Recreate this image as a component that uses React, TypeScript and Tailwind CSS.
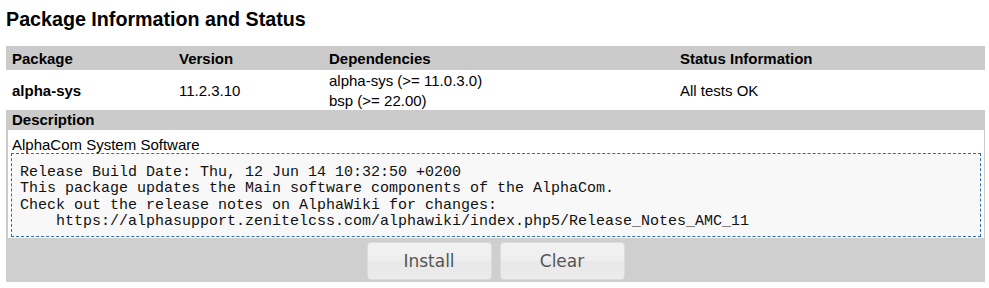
import React from "react";

export default function App() {
  const sans = { fontFamily: '"Liberation Sans", Arial, sans-serif' };
  return (
    <div className="w-[989px] h-[288px] bg-white pl-[6px] pr-[4px] text-black" style={sans}>
      <div className="pt-[8px] text-[19.7px] leading-[22px] font-bold">Package Information and Status</div>
      <div className="mt-[16px] w-[979px] text-[15px]">
        <div className="grid grid-cols-[167px_150px_351px_311px] bg-[#cbcbcb] h-[24px] items-center font-bold leading-[17px]">
          <div className="pl-[6px]">Package</div>
          <div className="pl-[6px]">Version</div>
          <div className="pl-[6px]">Dependencies</div>
          <div className="pl-[6px]">Status Information</div>
        </div>
        <div className="grid grid-cols-[167px_150px_351px_311px] h-[40px] items-center leading-[17px]">
          <div className="pl-[6px] font-bold">alpha-sys</div>
          <div className="pl-[6px]">11.2.3.10</div>
          <div className="pl-[6px] leading-[20px] pt-[1px]">
            <div>alpha-sys (&gt;= 11.0.3.0)</div>
            <div>bsp (&gt;= 22.00)</div>
          </div>
          <div className="pl-[6px]">All tests OK</div>
        </div>
        <div className="bg-[#cbcbcb] h-[20px] leading-[20px] pl-[6px] font-bold">Description</div>
        <div className="border-l-2 border-r border-[#cbcbcb] bg-white pb-[1px]">
          <div className="pl-[4px] pt-[6px] leading-[17px]">AlphaCom System Software</div>
          <pre
            className="ml-[3px] mr-[3px] border border-dashed border-[#2e6db4] bg-[#f8f8f8] pl-[8px] pt-[11px] pb-[5px] text-[15px] leading-[16.4px] text-[#111]"
            style={{ fontFamily: '"Liberation Mono", "Courier New", monospace' }}
          >{`Release Build Date: Thu, 12 Jun 14 10:32:50 +0200
This package updates the Main software components of the AlphaCom.
Check out the release notes on AlphaWiki for changes:
    https://alphasupport.zenitelcss.com/alphawiki/index.php5/Release_Notes_AMC_11`}</pre>
        </div>
        <div className="bg-[#d0cfcf] h-[44px] pt-[4px] flex justify-center gap-[8px]">
          {["Install", "Clear"].map((t) => (
            <button
              key={t}
              className="w-[125px] h-[38px] rounded-[4px] border border-[#dcdcdc] bg-[linear-gradient(to_bottom,#f2f2f2_0%,#eeeeee_50%,#e8e8e8_52%,#ececec_100%)] pt-[2px] text-[17px] text-[#555555]"
              style={{ fontFamily: '"DejaVu Sans", Verdana, sans-serif' }}
            >
              {t}
            </button>
          ))}
        </div>
      </div>
    </div>
  );
}
